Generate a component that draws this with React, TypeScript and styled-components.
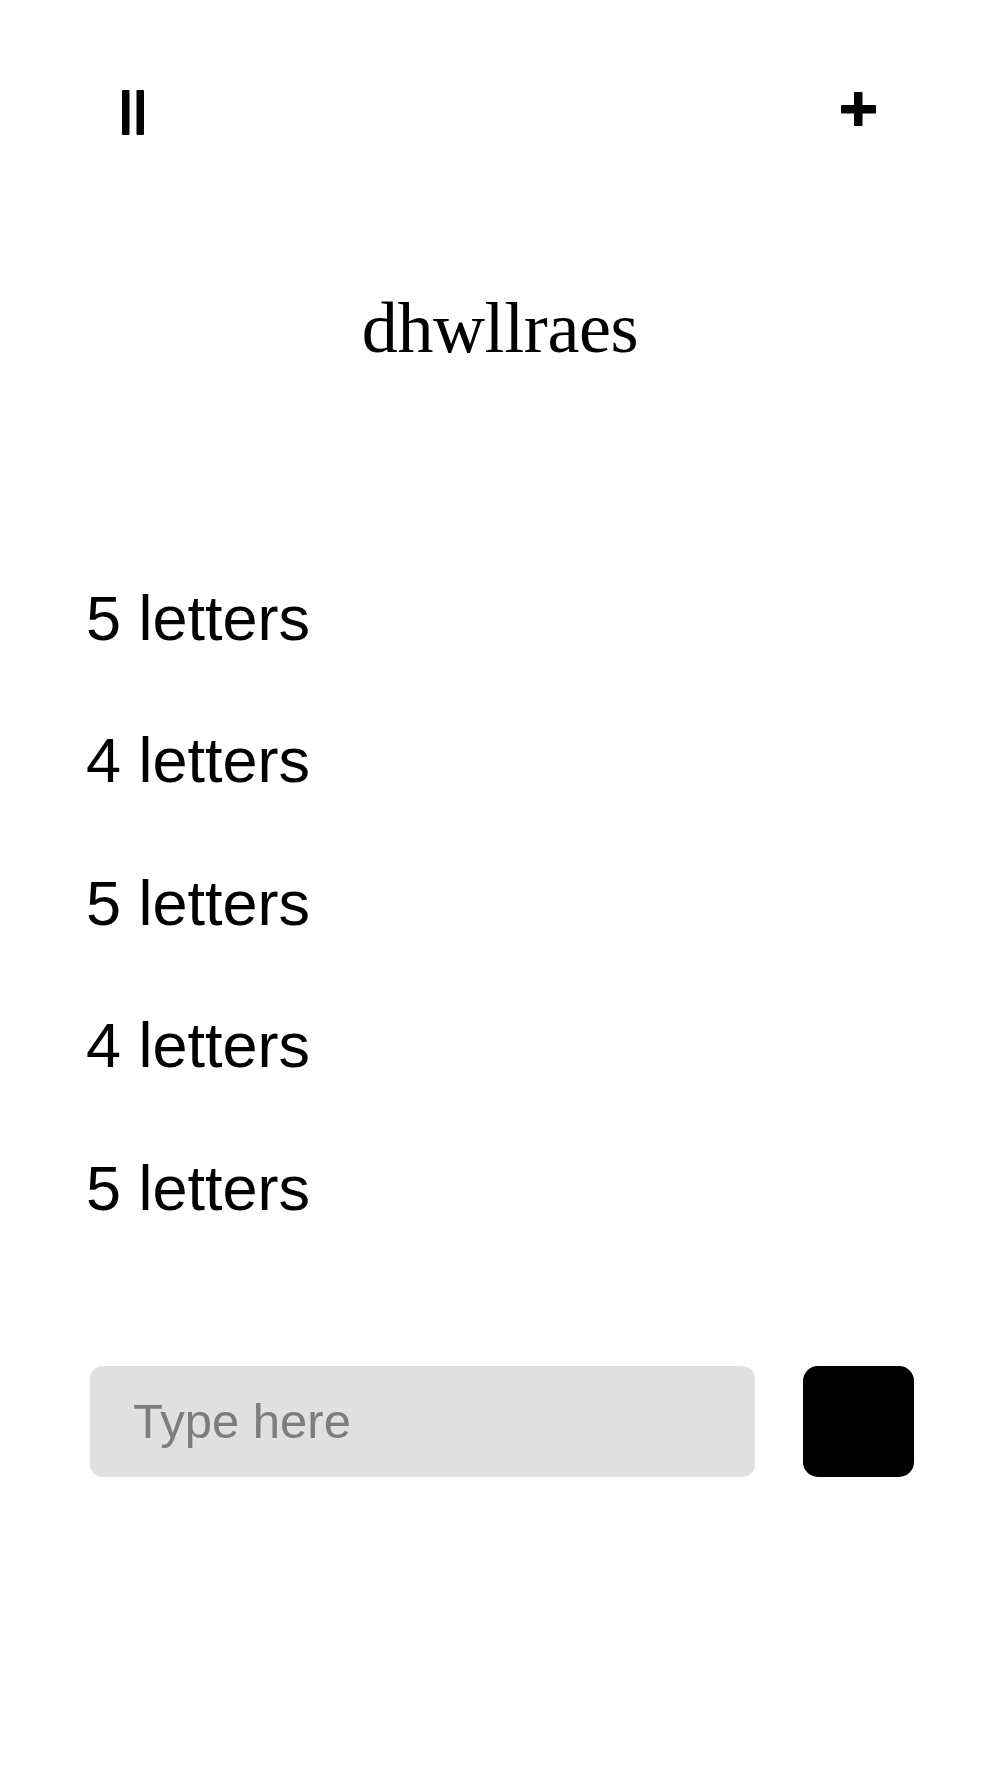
import React from "react";
import styled, { createGlobalStyle } from "styled-components";

const GlobalStyle = createGlobalStyle`
  html, body {
    margin: 0;
    padding: 0;
    background: #ffffff;
  }
  body {
    font-family: "Liberation Sans", Arial, sans-serif;
    color: #000000;
  }
  * { box-sizing: border-box; }
`;

const Page = styled.div`
  width: 1000px;
  min-height: 1778px;
  display: flex;
  flex-direction: column;
  background: #ffffff;
`;

const Header = styled.header`
  display: flex;
  justify-content: space-between;
  align-items: flex-start;
  padding: 90px 124px 0 122px;
  height: 135px;
`;

const IconButton = styled.button<{ $offset?: number }>`
  border: none;
  background: none;
  padding: 0;
  margin-top: ${(p) => p.$offset ?? 0}px;
  display: flex;
  cursor: pointer;
`;

const Title = styled.h1`
  margin: 156.7px 0 0;
  font-family: "Liberation Serif", "Times New Roman", serif;
  font-weight: 400;
  font-size: 72px;
  line-height: 72px;
  text-align: center;
  letter-spacing: -0.4px;
`;

const List = styled.ul`
  list-style: none;
  margin: 223px 0 0;
  padding: 0 0 0 86px;
  display: flex;
  flex-direction: column;
  gap: 79.5px;
`;

const Row = styled.li`
  font-size: 63px;
  line-height: 63px;
  height: 63px;
`;

const Composer = styled.form`
  margin-top: 146.3px;
  padding: 0 0 0 90px;
  display: flex;
  align-items: center;
  gap: 48px;
`;

const Field = styled.input`
  flex: none;
  width: 665px;
  height: 111px;
  border: none;
  outline: none;
  border-radius: 13px;
  background: #e0e0e0;
  padding: 0 0 0 43px;
  font-family: "Liberation Sans", Arial, sans-serif;
  font-size: 49px;
  color: #000;
  &::placeholder {
    color: #7d7d7d;
  }
`;

const Submit = styled.button`
  width: 111px;
  height: 111px;
  flex: none;
  border: none;
  padding: 0;
  border-radius: 15px;
  background: #000000;
  cursor: pointer;
`;

const PauseIcon = () => (
  <svg width="23" height="45" viewBox="0 0 23 45">
    <rect x="0" y="0" width="7.5" height="45" rx="1" fill="#000" />
    <rect x="14.5" y="0" width="7.5" height="45" rx="1" fill="#000" />
  </svg>
);

const PlusIcon = () => (
  <svg width="35" height="34" viewBox="0 0 35 34">
    <rect x="0" y="13" width="35" height="8.5" rx="1" fill="#000" />
    <rect x="13" y="0" width="8.5" height="34" rx="1" fill="#000" />
  </svg>
);

const rows = ["5 letters", "4 letters", "5 letters", "4 letters", "5 letters"];

export default function App() {
  return (
    <>
      <GlobalStyle />
      <Page>
        <Header>
          <IconButton aria-label="pause">
            <PauseIcon />
          </IconButton>
          <IconButton aria-label="add" $offset={2}>
            <PlusIcon />
          </IconButton>
        </Header>
        <Title>dhwllraes</Title>
        <List>
          {rows.map((r, i) => (
            <Row key={i}>{r}</Row>
          ))}
        </List>
        <Composer onSubmit={(e) => e.preventDefault()}>
          <Field placeholder="Type here" />
          <Submit type="submit" aria-label="submit" />
        </Composer>
      </Page>
    </>
  );
}
